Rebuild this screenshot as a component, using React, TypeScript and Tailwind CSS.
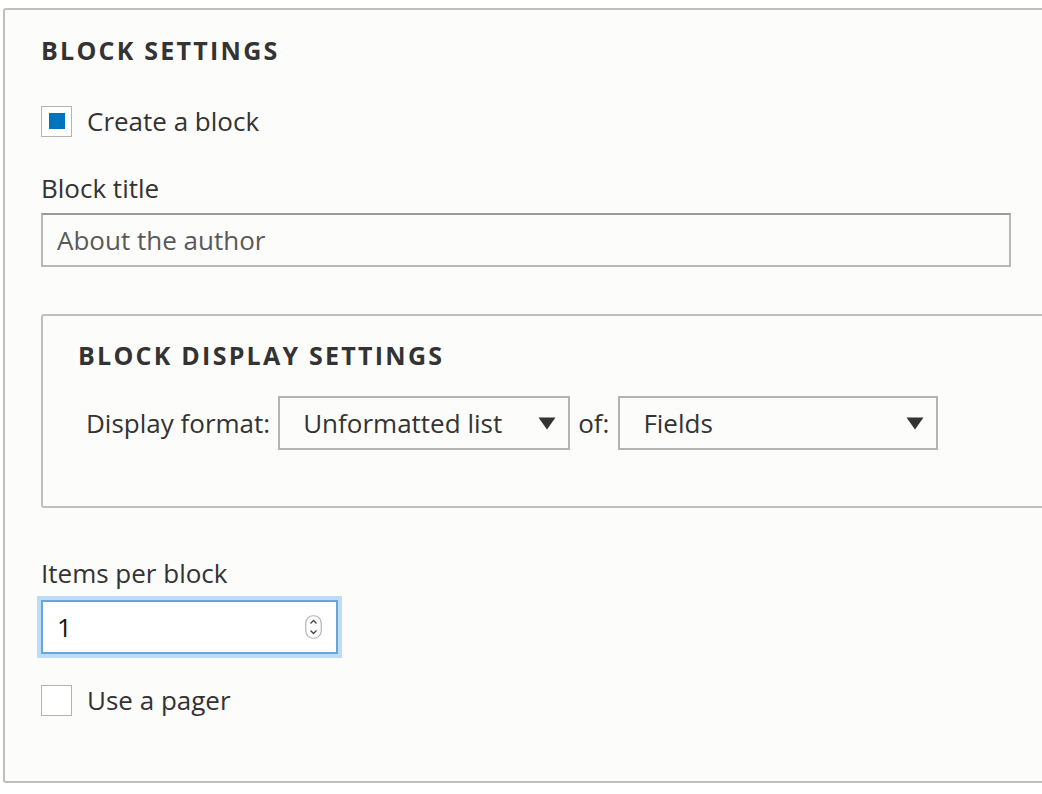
import type { ReactNode } from "react";

const font = { fontFamily: '"Open Sans", "Noto Sans", sans-serif' };

function Checkbox({ checked, label }: { checked?: boolean; label: string }) {
  return (
    <div className="flex h-[34px] items-center">
      <span className="flex h-[31px] w-[31px] items-center justify-center border-[1.5px] border-[#b3b3b3] bg-white">
        {checked && <span className="block h-[16px] w-[16px] bg-[#0074bd]" />}
      </span>
      <span className="ml-[15px] text-[26px] leading-[34px] text-[#333]">{label}</span>
    </div>
  );
}

function Heading({ children }: { children: ReactNode }) {
  return (
    <h2 className="text-[25px] font-bold uppercase leading-[34px] tracking-[0.09em] text-[#333]">{children}</h2>
  );
}

function Select({ value, width }: { value: string; width: string }) {
  return (
    <div
      className={`flex h-[54px] ${width} items-center justify-between border-2 border-[#b3b3b3] bg-[#fcfcfa] pl-[23px] pr-[12px]`}
    >
      <span className="text-[26px] leading-[34px] text-[#333]">{value}</span>
      <svg width="18" height="13" viewBox="0 0 18 13">
        <path d="M0.5 0.5 L17.5 0.5 L9 12.5 Z" fill="#333" />
      </svg>
    </div>
  );
}

export default function App() {
  return (
    <div className="min-h-screen w-full overflow-hidden bg-white pt-[8px]" style={font}>
      <div className="ml-[3px] w-[1100px] rounded-[3px] border-2 border-[#bfbfbf] bg-[#fcfcfa] pb-[64px] pl-[36px] pr-[20px] pt-[23px]">
        <Heading>Block settings</Heading>

        <div className="mt-[37px]">
          <Checkbox checked label="Create a block" />
        </div>

        <label className="mt-[33px] block text-[26px] leading-[34px] text-[#333]">Block title</label>
        <div className="mt-[8px] flex h-[54px] w-[970px] items-center border-2 border-[#b8b8b8] border-t-[#9a9a9a] bg-[#fcfcfa] pl-[14px]">
          <span className="text-[26px] leading-[34px] text-[#595959]">About the author</span>
        </div>

        <div className="mt-[47px] rounded-[3px] border-2 border-[#bfbfbf] pb-[56px] pl-[35px] pt-[22px]">
          <Heading>Block display settings</Heading>
          <div className="ml-[8px] mt-[24px] flex items-center">
            <span className="text-[26px] leading-[34px] text-[#333]">Display format:</span>
            <div className="ml-[8px]">
              <Select value="Unformatted list" width="w-[292px]" />
            </div>
            <span className="ml-[8px] text-[26px] leading-[34px] text-[#333]">of:</span>
            <div className="ml-[9px]">
              <Select value="Fields" width="w-[320px]" />
            </div>
          </div>
        </div>

        <label className="mt-[48px] block text-[26px] leading-[34px] text-[#333]">Items per block</label>
        <div className="mt-[10px] flex h-[54px] w-[297px] items-center justify-between border-2 border-[#6aa5d8] bg-white pl-[14px] pr-[14px] shadow-[0_0_0_4px_#bcdcf9]">
          <span className="text-[26px] leading-[34px] text-[#111]">1</span>
          <svg width="17" height="24" viewBox="0 0 17 24">
            <rect x="0.75" y="0.75" width="15.5" height="22.5" rx="7.5" fill="#fff" stroke="#b5b5b5" strokeWidth="1.2" />
            <path d="M5.5 8.5 L8.5 5.5 L11.5 8.5" fill="none" stroke="#444" strokeWidth="1.3" />
            <path d="M5.5 15.5 L8.5 18.5 L11.5 15.5" fill="none" stroke="#444" strokeWidth="1.3" />
          </svg>
        </div>

        <div className="mt-[29px]">
          <Checkbox label="Use a pager" />
        </div>
      </div>
    </div>
  );
}
